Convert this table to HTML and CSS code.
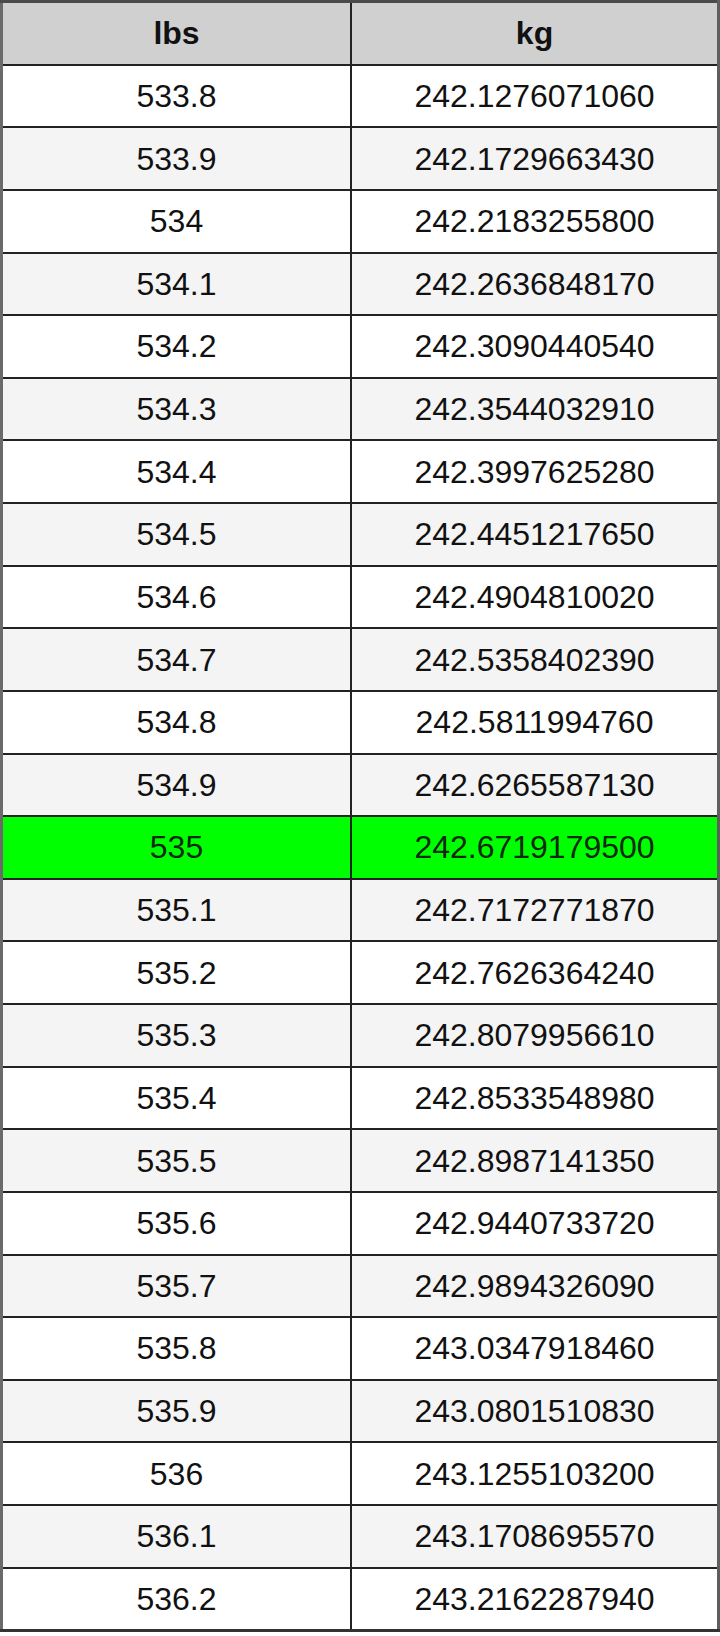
FILE: index.html
```html
<!DOCTYPE html>
<html>
<head>
<meta charset="utf-8">
<link rel="stylesheet" href="styles.css">
</head>
<body>
<table class="conv">
<thead>
<tr><th>lbs</th><th>kg</th></tr>
</thead>
<tbody>
<tr><td>533.8</td><td>242.1276071060</td></tr>
<tr><td>533.9</td><td>242.1729663430</td></tr>
<tr><td>534</td><td>242.2183255800</td></tr>
<tr><td>534.1</td><td>242.2636848170</td></tr>
<tr><td>534.2</td><td>242.3090440540</td></tr>
<tr><td>534.3</td><td>242.3544032910</td></tr>
<tr><td>534.4</td><td>242.3997625280</td></tr>
<tr><td>534.5</td><td>242.4451217650</td></tr>
<tr><td>534.6</td><td>242.4904810020</td></tr>
<tr><td>534.7</td><td>242.5358402390</td></tr>
<tr><td>534.8</td><td>242.5811994760</td></tr>
<tr><td>534.9</td><td>242.6265587130</td></tr>
<tr class="hl"><td>535</td><td>242.6719179500</td></tr>
<tr><td>535.1</td><td>242.7172771870</td></tr>
<tr><td>535.2</td><td>242.7626364240</td></tr>
<tr><td>535.3</td><td>242.8079956610</td></tr>
<tr><td>535.4</td><td>242.8533548980</td></tr>
<tr><td>535.5</td><td>242.8987141350</td></tr>
<tr><td>535.6</td><td>242.9440733720</td></tr>
<tr><td>535.7</td><td>242.9894326090</td></tr>
<tr><td>535.8</td><td>243.0347918460</td></tr>
<tr><td>535.9</td><td>243.0801510830</td></tr>
<tr><td>536</td><td>243.1255103200</td></tr>
<tr><td>536.1</td><td>243.1708695570</td></tr>
<tr><td>536.2</td><td>243.2162287940</td></tr>
</tbody>
</table>
</body>
</html>
```

FILE: styles.css
```css
html, body {
  margin: 0;
  padding: 0;
  background: #ffffff;
}

.conv {
  width: 720px;
  border-collapse: collapse;
  table-layout: fixed;
  font-family: "Liberation Sans", Arial, sans-serif;
  font-size: 32px;
  color: #111111;
  border: 3px solid #5a5a5a;
}

.conv th,
.conv td {
  height: 60.64px;
  padding: 0;
  text-align: center;
  vertical-align: middle;
  border: 2px solid #222222;
  line-height: 1;
}

.conv th:first-child,
.conv td:first-child {
  width: 347px;
  border-left: 3px solid #6a6a6a;
}

.conv th:last-child,
.conv td:last-child {
  border-right: 3px solid #5e5e5e;
}

.conv thead th {
  background: #d0d0d0;
  font-weight: bold;
  border-top: 3px solid #4a4a4a;
}

.conv tbody tr:nth-child(even) td {
  background: #f4f4f4;
}

.conv tbody tr:last-child td {
  border-bottom: 3px solid #333333;
}

.conv tbody tr.hl td {
  background: #00ff00;
  color: #0f2a0f;
}
```
